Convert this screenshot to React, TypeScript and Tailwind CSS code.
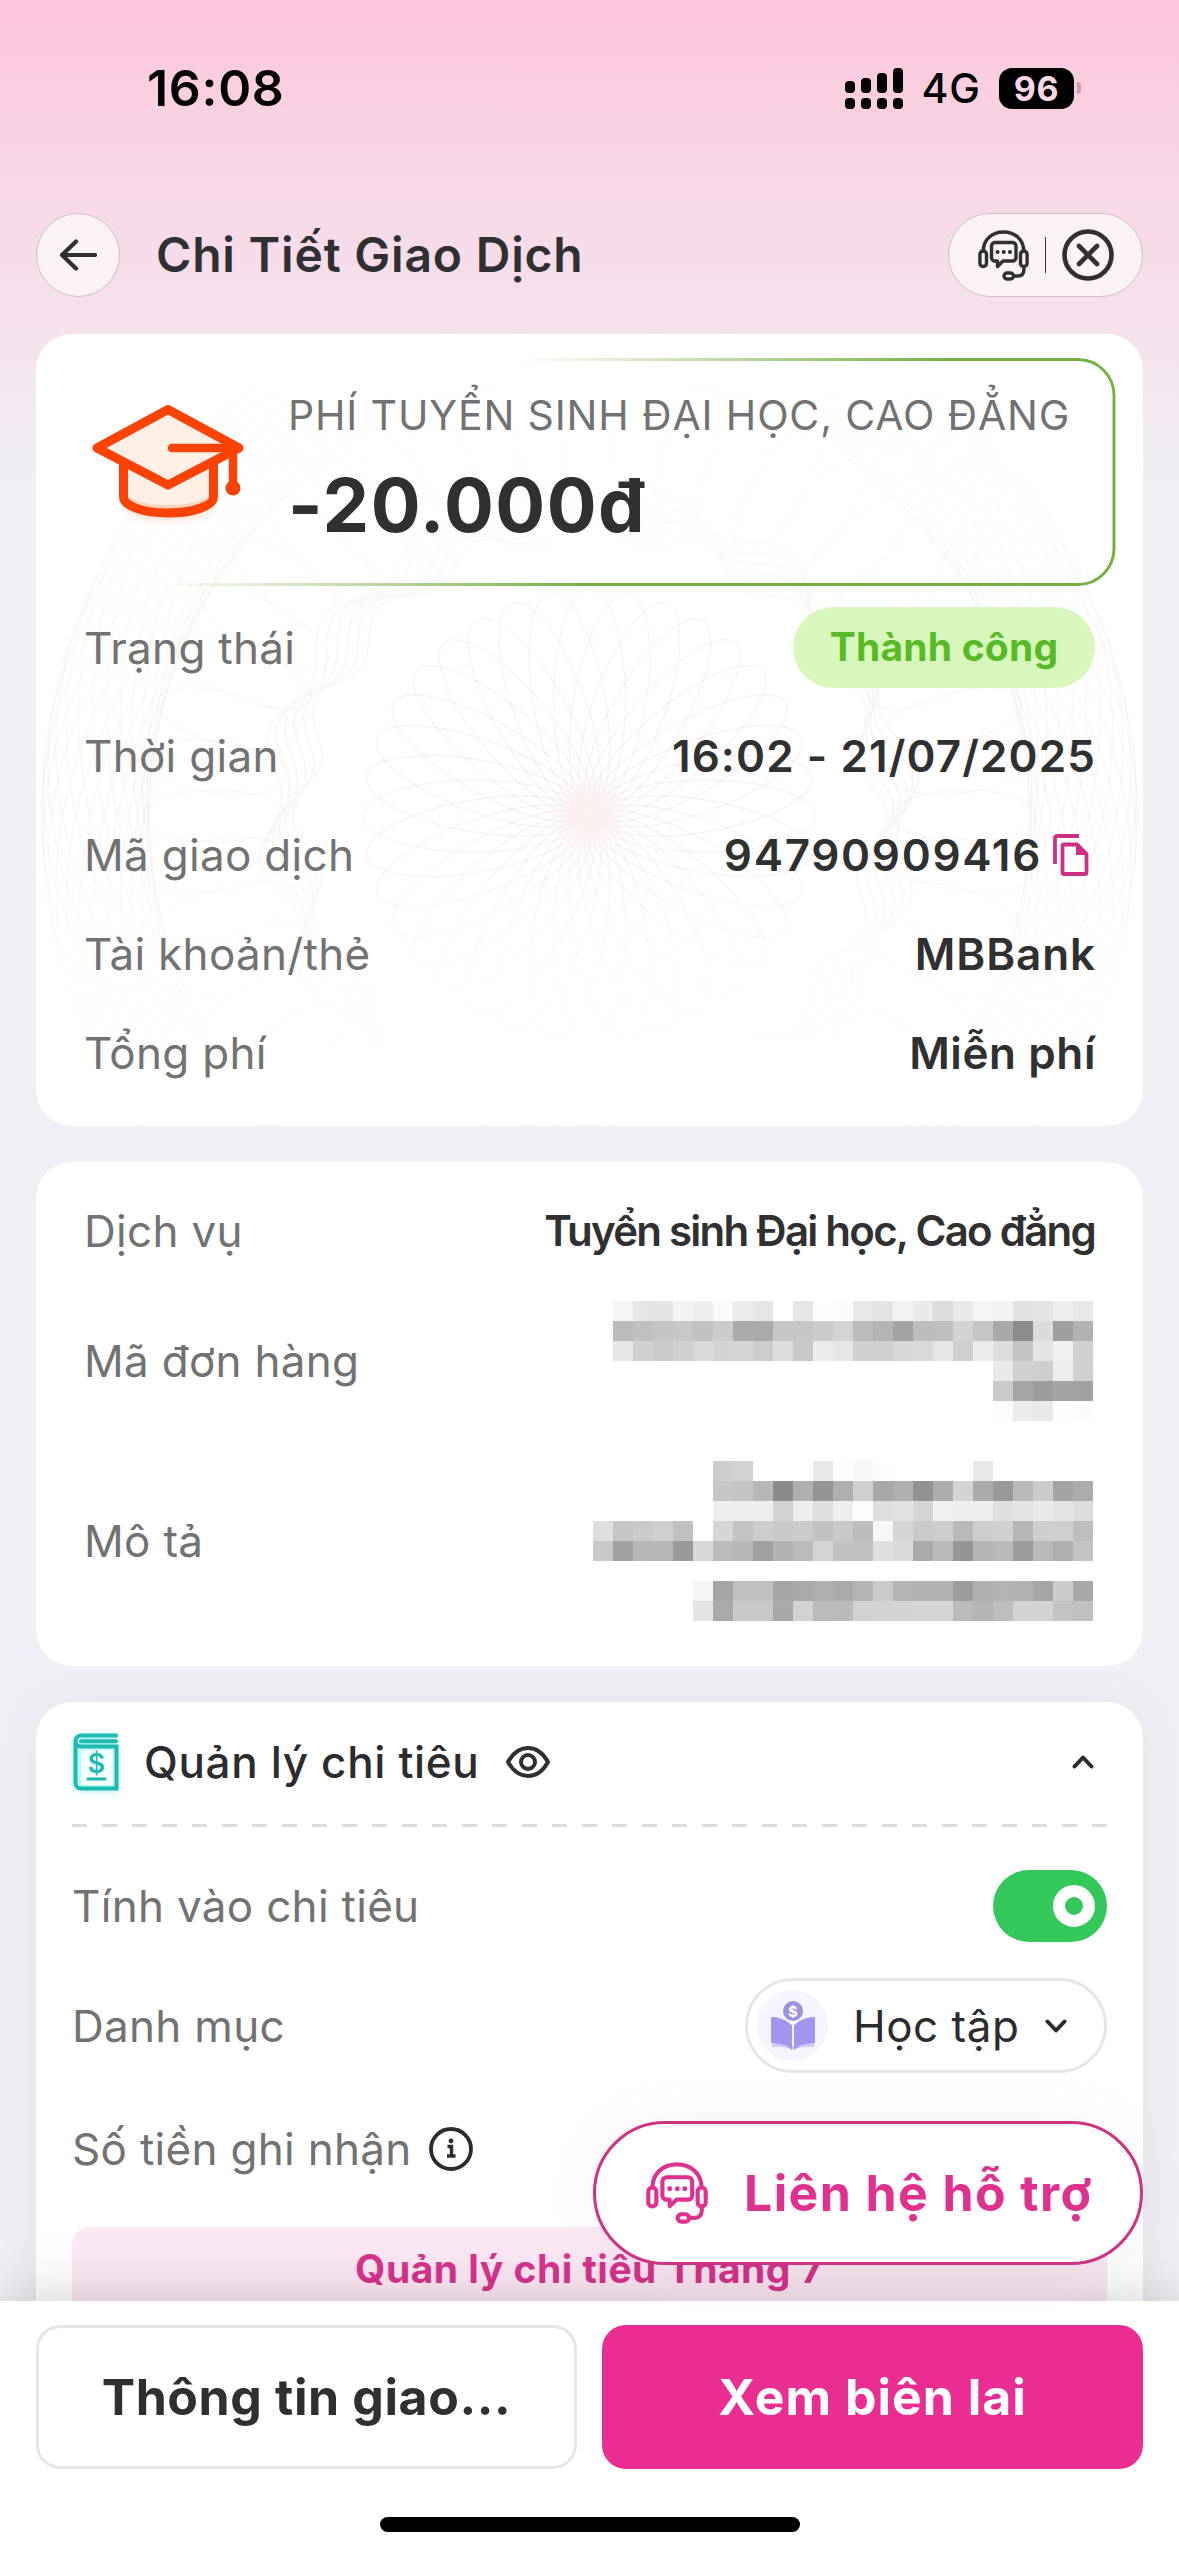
import { useState, type ReactNode } from "react";
import { clsx } from "clsx";

// One entry per mosaic row, two hex digits (a grey level) per cell.
const ORDER_MOSAIC = [
  "f5e6e4f3eefaebe6ffe6fcfbe8e4f2eadce9f5f3e2e5eee8",
  "bbc0c4c8c2ccaaaac6c6ccd4bbb4a3bdbfd3c6a98cdb9fb1",
  "e6d0cbd0dad3d5cdddc9ece6d1cfd8d9e6cfecddc4e4f0d1",
  "e9d1ceedd0",
  "caa69ca4a1",
  "fcebeafefb",
];

const NOTE_MOSAIC = [
  "ced3ffffffe9fef7fdffffffffe9ffffffffff",
  "c6c4b78bb094afcfa8b092add3ab99bacca4ac",
  "eeeeefd3eee0eefcdee2d4f1efeee0e5eae5dc",
  "dfc6cbcfc0ffd6c3cdc9cbc1c9bdf7d6cacdb9cdd0b6cecfbe",
  "c9a1b8b699d7bbb8a0b2bbd4c2c2dfdbaaba95b5ba9cbab0c4",
  "",
  "f5a5c0c0a6aab0aab5cab5b3b39cb0b4b1a5cca8",
  "e4aac9c9a9d2bbbad2d3d3d6d6bbb5bed3d3c3c0",
];

function Mosaic({ rows }: { rows: string[] }) {
  return (
    <div className="flex flex-col" aria-hidden="true">
      {rows.map((row, i) => (
        <div key={i} className="flex h-5 justify-end">
          {(row.match(/../g) ?? []).map((level, j) => (
            <span
              key={j}
              className="h-5 w-5"
              style={{ backgroundColor: `#${level}${level}${level}` }}
            />
          ))}
        </div>
      ))}
    </div>
  );
}

function HeadsetIcon({ className }: { className?: string }) {
  return (
    <svg
      viewBox="0 0 51 51"
      className={className}
      fill="none"
      stroke="currentColor"
      strokeWidth="3.4"
      strokeLinecap="round"
      strokeLinejoin="round"
      aria-hidden="true"
    >
      <path d="M5.300 21C5.300 9.500 14 2 25.500 2S45.700 9.500 45.700 21" />
      <rect x="1.9" y="21" width="6.6" height="15.5" rx="3.2" />
      <rect x="42.5" y="21" width="6.6" height="15.5" rx="3.2" />
      <path d="M45.900 37v2.500c0 4-2 6.500-6 6.500h-4.400" />
      <rect x="26" y="43" width="9.500" height="6" rx="3" />
      <path d="M17 12.500h17.500a3.500 3.500 0 0 1 3.500 3.500v11.500a3.500 3.500 0 0 1-3.500 3.500H25l-5.500 5.500V31H17a3.500 3.500 0 0 1-3.500-3.500V16a3.500 3.500 0 0 1 3.500-3.500z" />
      <path d="M19.500 22h.1M25.700 22h.1M31.900 22h.1" strokeWidth="4" />
    </svg>
  );
}

function GraduationCapIcon() {
  return (
    <svg width="154" height="122" viewBox="0 0 154 122" fill="none" aria-hidden="true">
      <ellipse cx="76" cy="107" rx="42" ry="11" fill="#ff5a1f" opacity="0.2" className="blur-[4px]" />
      <path d="M31.500 60v35c0 9 20 16 44.500 16s45.500-7 45.500-16V60" fill="#ffefe4" />
      <path d="M33 90c4 9 22 13 43 13s40-4 44-13v7c-4 9-22 13-44 13s-40-4-43-13z" fill="#ffd4bd" />
      <path
        d="M31.500 60v35c0 9 20 16 44.500 16s45.500-7 45.500-16V60"
        stroke="#fb4207"
        strokeWidth="9"
      />
      <path
        d="M76 7.500 147 46 76 83 5 46z"
        fill="#ffefe4"
        stroke="#fb4207"
        strokeWidth="9"
        strokeLinejoin="round"
      />
      <path d="M80 46h62M141 48v36" stroke="#fb4207" strokeWidth="8.500" strokeLinecap="round" />
      <circle cx="141" cy="86" r="7.500" fill="#fb4207" />
    </svg>
  );
}

function LedgerIcon() {
  return (
    <svg
      width="46"
      height="58"
      viewBox="0 0 46 58"
      fill="none"
      className="overflow-visible drop-shadow-[0_1px_3px_#a5f5f0]"
      aria-hidden="true"
    >
      <path d="M2 7v44a5 5 0 0 0 5 5h37V13H8A6 6 0 0 1 8 2h35" fill="#b9f8f4" />
      <rect x="8" y="17" width="32" height="35" rx="2" fill="#f4fffe" />
      <path
        d="M43 2.500H8a5.500 5.500 0 0 0-5.500 5.500v42a5.500 5.500 0 0 0 5.500 5.500h35.500V13.500H8a5.500 5.500 0 0 1-5.500-5.500M43 8.200H8"
        stroke="#1fb9b2"
        strokeWidth="4"
        strokeLinecap="round"
      />
      <path d="M15 46h17" stroke="#1fb9b2" strokeWidth="3.200" strokeLinecap="round" />
      <text
        x="23.500"
        y="39.500"
        textAnchor="middle"
        className="font-[Inter] text-[27px] font-semibold"
        fill="#1fb9b2"
      >
        $
      </text>
    </svg>
  );
}

function StudyIcon() {
  return (
    <svg width="44" height="50" viewBox="0 0 44 50" aria-hidden="true">
      <path d="M1 38c9-2 15 1 20 7h2c5-6 11-9 20-7v8c-9-1-15 0-21 3-6-3-12-4-21-3z" fill="#cfc8fb" />
      <path d="M0 17.500C0 16 1 15.800 2 16c7 .5 14 3 19 8.500V49c-5-5-12-7-21-7z" fill="#a297ee" />
      <path d="M44 17.500c0-1.500-1-1.700-2-1.500-7 .5-14 3-19 8.500V49c5-5 12-7 21-7z" fill="#a297ee" />
      <circle cx="22" cy="10" r="10" fill="#9c90dd" />
      <text
        x="22"
        y="15.500"
        textAnchor="middle"
        className="font-[Inter] text-[15px] font-bold"
        fill="#fff"
      >
        $
      </text>
    </svg>
  );
}

function CopyIcon() {
  return (
    <svg width="36" height="42" viewBox="0 0 36 42" fill="none" aria-hidden="true">
      <path d="M2 30V4a2 2 0 0 1 2-2h22" stroke="#cb3085" strokeWidth="3.800" />
      <path
        d="M11 10.500h13l9.500 9.500v18.500a1.500 1.500 0 0 1-1.500 1.500H11a1.500 1.500 0 0 1-1.500-1.500V12a1.500 1.500 0 0 1 1.500-1.500z"
        stroke="#cb3085"
        strokeWidth="3.800"
      />
      <path d="M23 10v11h11z" fill="#cb3085" />
    </svg>
  );
}

// Closed curve around the origin whose radius ripples `lobes` times.
function ripple(radius: number, depth: number, lobes: number, phase: number) {
  const points: string[] = [];
  for (let i = 0; i < 360; i++) {
    const t = (i / 360) * Math.PI * 2;
    const r = radius + depth * Math.cos(lobes * t + phase);
    points.push(`${(r * Math.cos(t)).toFixed(1)} ${(r * Math.sin(t)).toFixed(1)}`);
  }
  return `M${points.join("L")}Z`;
}

/** Banknote-style rosette behind the receipt rows. */
function Guilloche() {
  return (
    <svg
      className="absolute inset-0 h-full w-full"
      viewBox="0 0 1107 792"
      fill="none"
      stroke="#d3a0a6"
      aria-hidden="true"
    >
      <defs>
        <linearGradient id="rosette-fade" x1="0" y1="0" x2="0" y2="1">
          <stop offset="0.05" stopColor="#fff" stopOpacity="0" />
          <stop offset="0.35" stopColor="#fff" stopOpacity="0.75" />
          <stop offset="0.6" stopColor="#fff" />
          <stop offset="0.92" stopColor="#fff" stopOpacity="0" />
        </linearGradient>
        <radialGradient id="rosette-heart">
          <stop stopColor="#fdf0f0" />
          <stop offset="0.4" stopColor="#fdf0f0" stopOpacity="0.9" />
          <stop offset="1" stopColor="#fdf0f0" stopOpacity="0" />
        </radialGradient>
        <mask id="rosette-mask">
          <rect width="1107" height="792" fill="url(#rosette-fade)" />
        </mask>
      </defs>
      <g mask="url(#rosette-mask)" strokeOpacity="0.2">
        <g transform="translate(553.500 482)">
          {Array.from({ length: 36 }, (_, i) => (
            <ellipse key={i} cx="116" rx="110" ry="36" transform={`rotate(${i * 10})`} />
          ))}
          {[0, 1, 2, 3, 4, 5].map((i) => (
            <path key={i} d={ripple(285 + i * 7, 12, 16, i * 0.45)} />
          ))}
          {Array.from({ length: 24 }, (_, i) => (
            <ellipse key={i} rx="548" ry="440" strokeOpacity="0.14" transform={`rotate(${i * 7.5})`} />
          ))}
          {Array.from({ length: 48 }, (_, i) => (
            <ellipse
              key={i}
              cx="375"
              rx="72"
              ry="26"
              strokeOpacity="0.13"
              transform={`rotate(${i * 7.5})`}
            />
          ))}
          <circle r="40" fill="url(#rosette-heart)" stroke="none" />
        </g>
      </g>
    </svg>
  );
}

function Row({
  label,
  className,
  children,
}: {
  label: ReactNode;
  className?: string;
  children?: ReactNode;
}) {
  return (
    <div className={clsx("flex items-center justify-between", className)}>
      <span className="text-[44px] tracking-[0.3px] text-[#727272]">{label}</span>
      {children}
    </div>
  );
}

function StatusBar() {
  const bars = [
    { id: 1, height: "h-3" },
    { id: 2, height: "h-[15px]" },
    { id: 3, height: "h-5" },
    { id: 4, height: "h-[25px]" },
  ];

  return (
    <div className="flex h-[176px] shrink-0 items-center justify-between pr-[98px] pl-[147px] text-black">
      <span className="text-[50px] font-semibold tracking-[0.7px]">16:08</span>
      <div className="flex items-center">
        <div className="flex items-end gap-1.5">
          {bars.map((bar) => (
            <div key={bar.id} className="flex flex-col gap-[5px]">
              <span className={clsx("w-2.5 rounded-[4px] bg-black", bar.height)} />
              <span className="h-[11px] w-2.5 rounded-[4px] bg-black" />
            </div>
          ))}
        </div>
        <span className="ml-[18px] pt-0.5 text-[41px] font-medium tracking-[1px]">4G</span>
        <div className="ml-[18px] flex h-[41px] w-[75px] items-center justify-center rounded-[13px] bg-black">
          <span className="text-[34px] font-bold tracking-[0.6px] text-[#fdd8e7]">96</span>
        </div>
        <span className="ml-[3px] h-3 w-1 rounded-r-full bg-[#c99db2]" />
      </div>
    </div>
  );
}

function Header() {
  return (
    <header className="mx-9 mt-[37px] flex h-[84px] shrink-0 items-center">
      <button
        type="button"
        aria-label="Quay lại"
        className="flex h-[84px] w-[84px] items-center justify-center rounded-full border border-[#d3bdc9] bg-[#faf2f7]"
      >
        <svg width="38" height="32" viewBox="0 0 38 32" fill="none" aria-hidden="true">
          <path
            d="M36 16H3M17 2.500 3 16l14 13.500"
            stroke="#303033"
            strokeWidth="4.200"
            strokeLinecap="round"
            strokeLinejoin="round"
          />
        </svg>
      </button>
      <h1 className="ml-9 text-[48px] font-semibold tracking-[0.8px] text-[#303033]">
        Chi Tiết Giao Dịch
      </h1>
      <div className="ml-auto flex h-[84px] w-[195px] items-center rounded-full border border-[#d3bdc9] bg-[#faf2f7] pl-[29px] text-[#303033]">
        <HeadsetIcon className="h-[51px] w-[51px]" />
        <span className="ml-4 h-9 w-px bg-[#303033]" />
        <svg width="52" height="52" viewBox="0 0 52 52" fill="none" className="ml-4" aria-hidden="true">
          <g stroke="currentColor" strokeWidth="4.600" strokeLinecap="round">
            <circle cx="26" cy="26" r="23.500" />
            <path d="m17 17 18 18M35 17 17 35" />
          </g>
        </svg>
      </div>
    </header>
  );
}

function ReceiptCard() {
  return (
    <section className="relative mx-9 mt-[37px] h-[792px] shrink-0 overflow-hidden rounded-[36px] bg-white">
      <Guilloche />
      <div className="relative flex flex-col pt-6 pr-[47px] pl-12">
        <div className="relative flex h-[228px] pt-5">
          {/* Green frame that fades out towards the top left */}
          <svg
            className="absolute top-0 -left-12"
            width="1107"
            height="228"
            viewBox="0 0 1107 228"
            fill="none"
            aria-hidden="true"
          >
            <defs>
              <linearGradient id="frame-fade" gradientUnits="userSpaceOnUse" x1="484" y1="0" x2="604" y2="193">
                <stop stopColor="#76b243" stopOpacity="0" />
                <stop offset="1" stopColor="#76b243" />
              </linearGradient>
            </defs>
            <path
              d="M60 1.500H1042a36 36 0 0 1 36 36V190.500a36 36 0 0 1-36 36H60"
              stroke="url(#frame-fade)"
              strokeWidth="3"
            />
          </svg>
          <div className="mt-6 ml-2">
            <GraduationCapIcon />
          </div>
          <div className="ml-[42px] flex flex-col">
            <span className="text-[41px] leading-[74px] tracking-[0.85px] whitespace-nowrap text-[#727272]">
              PHÍ TUYỂN SINH ĐẠI HỌC, CAO ĐẲNG
            </span>
            <span className="text-[74px] leading-[106px] font-bold tracking-[1.5px] text-[#303030]">
              -20.000đ
            </span>
          </div>
        </div>

        <Row label="Trạng thái" className="mt-[21px] h-[81px]">
          <span className="mr-px flex h-[81px] w-[302px] items-center justify-center rounded-full bg-[#d8f7bd] text-[39px] font-bold tracking-[0.2px] text-[#57ba27]">
            Thành công
          </span>
        </Row>
        <div className="mt-[18px] text-[44px] text-[#303030]">
          <Row label="Thời gian" className="h-[99px]">
            <span className="font-semibold tracking-[1.1px]">16:02 - 21/07/2025</span>
          </Row>
          <Row label="Mã giao dịch" className="h-[99px]">
            <span className="flex items-center gap-[11px] pr-[7px]">
              <span className="font-semibold tracking-[1.7px]">94790909416</span>
              <CopyIcon />
            </span>
          </Row>
          <Row label="Tài khoản/thẻ" className="h-[99px]">
            <span className="font-semibold tracking-[0.9px]">MBBank</span>
          </Row>
          <Row label="Tổng phí" className="h-[99px]">
            <span className="font-semibold tracking-[0.6px]">Miễn phí</span>
          </Row>
        </div>
      </div>
    </section>
  );
}

function ServiceCard() {
  return (
    <section className="mx-9 mt-9 flex h-[504px] shrink-0 flex-col rounded-[36px] bg-white pt-[19px] pr-[50px] pl-12">
      <Row label="Dịch vụ" className="h-[99px]">
        <span className="-mr-0.5 text-[42px] font-semibold tracking-[-1.75px] text-[#303030]">
          Tuyển sinh Đại học, Cao đẳng
        </span>
      </Row>
      <Row label="Mã đơn hàng" className="mt-[21px]">
        <Mosaic rows={ORDER_MOSAIC} />
      </Row>
      <Row label="Mô tả" className="mt-10">
        <Mosaic rows={NOTE_MOSAIC} />
      </Row>
    </section>
  );
}

function SpendingCard() {
  const [counted, setCounted] = useState(true);

  return (
    <section className="mx-9 mt-9 shrink-0 rounded-[36px] bg-white px-9 pb-10 shadow-[0_0_45px_rgba(0,0,0,0.05)]">
      <div className="flex h-[122px] items-center pb-0.5">
        <span className="ml-px">
          <LedgerIcon />
        </span>
        <h2 className="ml-[25px] text-[44px] font-medium tracking-[0.65px] text-[#2c2c2e]">
          Quản lý chi tiêu
        </h2>
        <svg width="46" height="34" viewBox="0 0 46 34" fill="none" className="ml-[26px]" aria-hidden="true">
          <g stroke="#303030" strokeWidth="4" strokeLinejoin="round">
            <path d="M3 17C8 8 14.500 3 23 3s15 5 20 14c-5 9-11.500 14-20 14S8 26 3 17z" />
            <circle cx="23" cy="17" r="7" />
          </g>
        </svg>
        <svg width="22" height="14" viewBox="0 0 22 14" fill="none" className="mr-[13px] ml-auto" aria-hidden="true">
          <path
            d="m2.500 11.500 8.500-9 8.500 9"
            stroke="#2c2c2e"
            strokeWidth="4"
            strokeLinecap="round"
            strokeLinejoin="round"
          />
        </svg>
      </div>
      <div className="h-[3px] bg-[repeating-linear-gradient(90deg,#dcdcdc_0_15px,transparent_15px_30px)]" />

      <Row label="Tính vào chi tiêu" className="mt-[43px] h-[72px]">
        <button
          type="button"
          role="switch"
          aria-checked={counted}
          aria-label="Tính vào chi tiêu"
          onClick={() => setCounted(!counted)}
          className={clsx(
            "flex h-[72px] w-[114px] items-center rounded-full px-3",
            counted ? "justify-end bg-[#34c759]" : "justify-start bg-gray-300"
          )}
        >
          <span className="h-[42px] w-[42px] rounded-full border-[12px] border-white" />
        </button>
      </Row>
      <Row label="Danh mục" className="mt-9 h-[95px]">
        <button
          type="button"
          className="flex h-[95px] w-[362px] items-center rounded-full border-[3px] border-[#e6e6e6] pl-[9px]"
        >
          <span className="flex h-[71px] w-[71px] items-center justify-center rounded-full bg-[#f6f5fe]">
            <StudyIcon />
          </span>
          <span className="ml-[25px] text-[44px] tracking-[0.5px] text-[#2c2c2e]">Học tập</span>
          <svg width="22" height="14" viewBox="0 0 22 14" fill="none" className="ml-[26px]" aria-hidden="true">
            <path
              d="m2.500 2.500 8.500 9 8.500-9"
              stroke="#2c2c2e"
              strokeWidth="4"
              strokeLinecap="round"
              strokeLinejoin="round"
            />
          </svg>
        </button>
      </Row>
      <Row
        label={
          <span className="flex items-center gap-[17px]">
            Số tiền ghi nhận
            <svg width="44" height="44" viewBox="0 0 44 44" fill="none" aria-hidden="true">
              <g stroke="#2c2c2e" strokeWidth="3.800">
                <circle cx="22" cy="22" r="20" />
                <path d="M18.500 19.500h4v9M18 29h8.500" strokeWidth="3.400" />
              </g>
              <circle cx="22" cy="14" r="2.400" fill="#2c2c2e" />
            </svg>
          </span>
        }
        className="mt-9 h-20"
      />
      <div className="mt-[38px] flex h-24 items-start justify-center rounded-[18px] bg-[#fde9f4] pt-[13px]">
        <span className="text-[39px] font-bold tracking-[0.5px] text-[#d9338e]">
          Quản lý chi tiêu Tháng 7
        </span>
      </div>
    </section>
  );
}

export default function App() {
  return (
    <div className="relative flex h-[2556px] w-[1179px] flex-col overflow-hidden bg-[#f0eff5] bg-[linear-gradient(180deg,#fdc5dd_0px,#f8d4e4_150px,#f6e1ec_320px,#f0eff5_480px)] font-[Inter,'Noto_Sans',sans-serif]">
      <main className="flex h-[2301px] shrink-0 flex-col overflow-hidden">
        <StatusBar />
        <Header />
        <ReceiptCard />
        <ServiceCard />
        <SpendingCard />
      </main>

      <footer className="relative h-[255px] shrink-0 bg-white px-9 pt-6 shadow-[0_0_60px_rgba(0,0,0,0.2)]">
        <div className="flex justify-between text-[50px] font-bold">
          <button
            type="button"
            className="h-[144px] w-[541px] rounded-[24px] border-[3px] border-[#e6e6e6] tracking-[0.6px] text-[#303030]"
          >
            Thông tin giao...
          </button>
          <button
            type="button"
            className="h-[144px] w-[541px] rounded-[24px] bg-[#ea2d92] tracking-[1px] text-white"
          >
            Xem biên lai
          </button>
        </div>
        <div className="mx-auto mt-12 h-[15px] w-[420px] rounded-full bg-black" />
      </footer>

      {/* Floating support button */}
      <button
        type="button"
        className="absolute right-9 bottom-[291px] flex h-[144px] w-[550px] items-center rounded-full border-[3px] border-[#cc3384] bg-white pl-[50px] text-[#df3290] shadow-[0_0_60px_rgba(0,0,0,0.05)]"
      >
        <HeadsetIcon className="h-[62px] w-[62px]" />
        <span className="ml-9 text-[50px] font-bold tracking-[1.4px] whitespace-nowrap">
          Liên hệ hỗ trợ
        </span>
      </button>
    </div>
  );
}
